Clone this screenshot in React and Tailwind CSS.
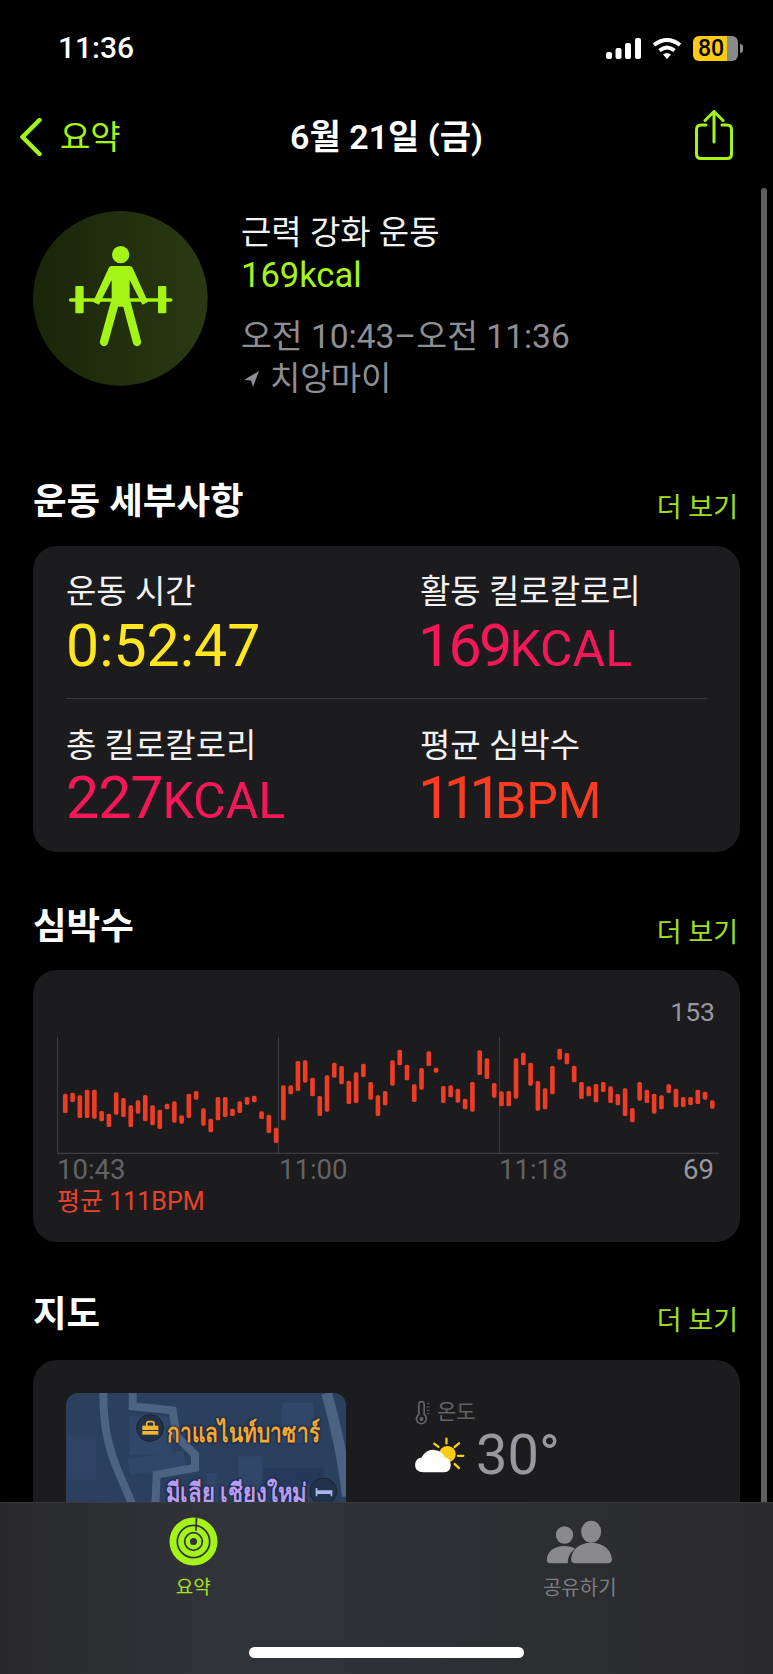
import React from 'react';

// top / bottom of each heart rate bar, measured from the chart
const heartBars = [
    [370, 428], [367, 395], [375, 443], [358, 443], [358, 445], [422, 453], [430, 470], [366, 433], [383, 440], [405, 470],
    [390, 430], [374, 453], [405, 465], [418, 476], [400, 417], [393, 457], [435, 460], [370, 443], [362, 388], [414, 466],
    [445, 486], [380, 450], [380, 440], [415, 437], [393, 428], [380, 403], [376, 396], [423, 446], [433, 488], [472, 518],
    [345, 450], [345, 372], [272, 362], [270, 337], [322, 378], [377, 437], [315, 424], [277, 322], [287, 342], [331, 401],
    [306, 398], [280, 320], [335, 388], [375, 437], [362, 405], [270, 346], [238, 285], [283, 330], [342, 395], [293, 358],
    [243, 287], [292, 307], [347, 398], [345, 381], [355, 397], [385, 417], [335, 424], [240, 314], [264, 326], [338, 382],
    [363, 408], [362, 408], [264, 385], [247, 284], [277, 346], [332, 421], [354, 417], [287, 372], [235, 268], [248, 282],
    [286, 336], [335, 386], [348, 378], [341, 396], [335, 365], [348, 398], [371, 405], [354, 437], [413, 456], [335, 391],
    [358, 398], [370, 430], [375, 417], [342, 368], [355, 411], [380, 410], [380, 404], [358, 401], [364, 388], [390, 415],
];

const SectionHeader = ({ title }) => (
    <div className="flex h-[44px] items-center justify-between pl-[33px] pr-[35px]">
        <h2 className="text-[36.5px] font-bold leading-[44px] text-white">{title}</h2>
        <span className="pt-[12px] text-[27px] leading-[44px] text-[#9fe01e]">더 보기</span>
    </div>
);

const Metric = ({ label, value, unit, color, numberClass = '', valueClass = '' }) => (
    <div>
        <div className="text-[33px] leading-[40px] text-[#f2f2f2]">{label}</div>
        <div className={`text-[59px] leading-[64px] ${color} ${valueClass}`}>
            <span className={numberClass}>{value}</span>
            {unit && <span className="text-[50px] leading-none">{unit}</span>}
        </div>
    </div>
);

const LifterIcon = () => (
    <svg viewBox="40 3 525 525" className="h-[175px] w-[175px]">
        <defs>
            <linearGradient id="lifterBg" x1="0" y1="0" x2="1" y2="0">
                <stop offset="0" stopColor="#1a2509" />
                <stop offset="1" stopColor="#2b3913" />
            </linearGradient>
        </defs>
        <circle cx="302" cy="265" r="262" fill="url(#lifterBg)" />
        <g fill="#a4f516" stroke="#a4f516">
            <circle cx="303" cy="134" r="26" stroke="none" />
            <path d="M275 168 H331 Q337 168 340 176 L385 276 L368 284 L330 210 V290 H276 V210 L238 284 L220 276 L266 176 Q269 168 275 168Z" stroke="none" />
            <path d="M153 270 H453" strokeWidth="11" strokeLinecap="round" />
            <rect x="167" y="228" width="25" height="82" rx="3" stroke="none" />
            <rect x="415" y="228" width="25" height="82" rx="3" stroke="none" />
            <path d="M285 280 L253 396 M321 280 L352 396" strokeWidth="25" strokeLinecap="round" fill="none" />
        </g>
    </svg>
);

const MapTile = () => (
    <div className="relative h-[180px] w-[280px] shrink-0 overflow-hidden rounded-[12px] bg-[#2b3f5e]">
        <svg viewBox="48 40 840 540" className="absolute inset-0 h-full w-full">
            <rect x="48" y="170" width="90" height="130" fill="#2f4464" />
            <rect x="240" y="110" width="125" height="115" fill="#304769" />
            <rect x="235" y="225" width="170" height="50" fill="#304769" transform="rotate(-8 320 250)" />
            <rect x="565" y="230" width="70" height="100" fill="#304769" />
            <rect x="695" y="70" width="95" height="120" fill="#304769" />
            <rect x="640" y="265" width="180" height="50" fill="#26395a" />
            <rect x="470" y="280" width="30" height="90" fill="#304769" />
            <g fill="none" stroke="#4c6384" strokeWidth="24">
                <path d="M160 40 C160 130 170 200 215 300 C235 345 240 360 250 380" />
                <path d="M248 40 V80 L368 92 L380 170 L435 225 V265 L320 285 L316 380" />
                <path d="M830 40 C855 130 880 240 892 350" strokeWidth="32" />
            </g>
            <circle cx="300" cy="145" r="40" fill="#22324a" stroke="#182436" strokeWidth="3" />
            <path d="M290 140 V132 Q290 126 296 126 H306 Q312 126 312 132 V140" fill="none" stroke="#f5b52e" strokeWidth="5" />
            <rect x="277" y="138" width="48" height="13" fill="#f5b52e" />
            <rect x="277" y="154" width="48" height="11" fill="#f5b52e" />
            <circle cx="820" cy="335" r="40" fill="#22324a" stroke="#182436" strokeWidth="3" />
            <path d="M797 325 V350 H802 V343 H842 V350 H847 V332 H802 V325Z" fill="#a9b6f0" />
        </svg>
        <span className="absolute left-[101px] top-[24px] origin-left scale-x-[0.8] whitespace-nowrap text-[26px] font-bold leading-[32px] text-[#f2a935] [text-shadow:0_0_2px_#101828,0_0_3px_#101828]">กาแลไนท์บาซาร์</span>
        <span className="absolute left-[100px] top-[84px] origin-left scale-x-[0.85] whitespace-nowrap text-[26px] font-bold leading-[32px] text-[#b79cf2] [text-shadow:0_0_2px_#101828,0_0_3px_#101828]">มีเลีย เชียงใหม่</span>
    </div>
);

const WeatherIcon = () => (
    <svg viewBox="40 140 155 115" className="h-[38px] w-[52px]">
        <circle cx="140" cy="195" r="25" fill="#fdcb12" />
        <g stroke="#fdcb12" strokeWidth="7" strokeLinecap="round">
            <path d="M137 148 V163 M162 173 L175 162 M172 200 H188 M162 225 L175 237 M100 163 L113 173" />
        </g>
        <path d="M68 250 Q42 250 42 228 Q42 208 62 205 Q75 180 100 182 Q125 184 132 205 Q150 208 150 228 Q150 250 130 250Z" fill="#fff" />
    </svg>
);

export default function App() {
    return (
        <div className="relative h-[1674px] w-[773px] overflow-hidden bg-black font-['Roboto','Noto_Sans_CJK_KR',sans-serif] text-white">
            {/* status bar */}
            <div className="flex h-[96px] items-center justify-between pl-[58px] pr-[30px]">
                <span className="text-[30px] font-medium leading-none">11:36</span>
                <div className="flex items-center">
                    <svg viewBox="0 0 35 21" className="h-[21px] w-[35px]" fill="#fff">
                        <rect x="0" y="14" width="6" height="7" rx="2" />
                        <rect x="9.5" y="10" width="6" height="11" rx="2" />
                        <rect x="19" y="5" width="6" height="16" rx="2" />
                        <rect x="29" y="0" width="6" height="21" rx="2" />
                    </svg>
                    <svg viewBox="0 0 30 21" className="ml-[11px] h-[21px] w-[30px]" fill="none" stroke="#fff" strokeWidth="4">
                        <path d="M2 7 Q15 -3 28 7" />
                        <path d="M7.5 12.5 Q15 6.5 22.5 12.5" />
                        <path d="M11 16.5 Q15 13.5 19 16.5 L15 21Z" fill="#fff" stroke="none" />
                    </svg>
                    <div className="ml-[11px] flex h-[25px] w-[45px] items-center justify-center rounded-[6px] bg-linear-to-r from-[#fdcb12] from-75% to-[#8a8a8c] to-75% text-[23px] font-medium leading-none text-black">
                        <span className="pr-[9px]">80</span>
                    </div>
                    <div className="ml-[2px] h-[9px] w-[3px] rounded-r-[3px] bg-[#8a8a8c]" />
                </div>
            </div>

            {/* nav bar */}
            <div className="grid h-[82px] grid-cols-[1fr_auto_1fr] items-center px-[20px]">
                <div className="flex items-center">
                    <svg viewBox="0 0 22 38" className="-ml-[1px] h-[38px] w-[23px]" fill="none" stroke="#a4f516" strokeWidth="4.5" strokeLinecap="round" strokeLinejoin="round">
                        <path d="M20 2 L3 19 L20 36" />
                    </svg>
                    <span className="ml-[18px] text-[33px] leading-none text-[#a4f516]">요약</span>
                </div>
                <h1 className="text-[34px] font-semibold leading-none">6월 21일 (금)</h1>
                <div className="flex justify-end pr-[20px]">
                    <svg viewBox="0 0 38 50" className="-mt-[4px] h-[50px] w-[38px]" fill="none" stroke="#a4f516" strokeWidth="3" strokeLinecap="round" strokeLinejoin="round">
                        <path d="M11 15 H6 Q1.5 15 1.5 19.5 V44 Q1.5 48.5 6 48.5 H32 Q36.5 48.5 36.5 44 V19.5 Q36.5 15 32 15 H27" />
                        <path d="M19 32 V2 M10 10.5 L19 1.5 L28 10.5" />
                    </svg>
                </div>
            </div>

            {/* workout summary */}
            <div className="ml-[33px] mt-[33px] flex">
                <LifterIcon />
                <div className="ml-[33px]">
                    <div className="text-[33px] leading-[43px] text-[#f2f2f2]">근력 강화 운동</div>
                    <div className="text-[34.5px] leading-[43px] text-[#a4f516]">169kcal</div>
                    <div className="mt-[18px] text-[33.5px] leading-[43px] text-[#8e8e93]">오전 10:43–오전 11:36</div>
                    <div className="flex items-center text-[33px] leading-[42px] text-[#8e8e93]">
                        <svg viewBox="0 0 15 16" className="ml-[3px] mr-[11px] h-[16px] w-[15px]" fill="#8e8e93">
                            <path d="M15 0 L0 9 L7 9.5 L9 16Z" />
                        </svg>
                        치앙마이
                    </div>
                </div>
            </div>

            {/* workout details */}
            <div className="mt-[80px]">
                <SectionHeader title="운동 세부사항" />
            </div>
            <div className="mx-[33px] mt-[22px] h-[306px] rounded-[24px] bg-[#1c1c1e] px-[33px] pt-[26px]">
                <div className="grid grid-cols-[354px_1fr]">
                    <Metric label="운동 시간" value="0:52:47" color="text-[#ffe620]" valueClass="pt-[2px]" />
                    <Metric label="활동 킬로칼로리" value="169" unit="KCAL" color="text-[#f5175a]" valueClass="pt-[2px]" numberClass="-ml-[2px] tracking-[-2.7px]" />
                </div>
                <div className="mt-[20px] h-px bg-[#38383a]" />
                <div className="mt-[27px] grid grid-cols-[354px_1fr]">
                    <Metric label="총 킬로칼로리" value="227" unit="KCAL" color="text-[#f5175a]" numberClass="tracking-[-1px]" />
                    <Metric label="평균 심박수" value="111" unit="BPM" color="text-[#ff3b1f]" numberClass="-ml-[2px] tracking-[-7.5px]" />
                </div>
            </div>

            {/* heart rate */}
            <div className="mt-[53px]">
                <SectionHeader title="심박수" />
            </div>
            <div className="mx-[33px] mt-[21px] h-[272px] rounded-[24px] bg-[#1c1c1e] pl-[24px] pr-[21px] pt-[27px]">
                <div className="pr-[4px] text-right text-[26.5px] leading-[30px] text-[#98989e]">153</div>
                <svg viewBox="0 0 662 117" className="mt-[10px] block h-[117px] w-[662px]">
                    <g stroke="#3d3d40" strokeWidth="1">
                        <path d="M0.5 0 V116 M221.5 0 V116 M442.5 0 V116" />
                        <path d="M0 116.5 H662" strokeWidth="1.5" />
                    </g>
                    {heartBars.map(([top, bottom], i) => (
                        <rect
                            key={i}
                            x={6 + i * 7.27}
                            y={(top - 200) / 3}
                            width="4.6"
                            height={(bottom - top) / 3}
                            rx="1.6"
                            fill="#ef3d23"
                        />
                    ))}
                </svg>
                <div className="grid grid-cols-[222px_220px_1fr_auto] pr-[5px] text-[27.5px] leading-[32px] text-[#636366]">
                    <span>10:43</span>
                    <span>11:00</span>
                    <span>11:18</span>
                    <span className="text-[#98989e]">69</span>
                </div>
                <div className="text-[25px] leading-[32px] text-[#e8432a]">평균 111BPM</div>
            </div>

            {/* map */}
            <div className="mt-[51px]">
                <SectionHeader title="지도" />
            </div>
            <div className="mx-[33px] mt-[23px] flex h-[300px] rounded-[24px] bg-[#1c1c1e] pl-[33px] pt-[33px]">
                <MapTile />
                <div className="ml-[68px]">
                    <div className="flex items-center pt-[4px] text-[21px] leading-[30px] text-[#636366]">
                        <svg viewBox="40 25 50 75" className="mr-[6px] h-[25px] w-[17px]" fill="none" stroke="#636366" strokeWidth="5">
                            <path d="M54 68 V38 Q54 30 62 30 Q70 30 70 38 V68 Q78 74 76 84 Q73 96 62 96 Q50 96 47 84 Q46 74 54 68Z" />
                            <circle cx="62" cy="82" r="6" fill="#636366" stroke="none" />
                            <path d="M78 36 H86 M78 46 H86 M78 56 H86 M78 66 H86" strokeWidth="3" />
                        </svg>
                        온도
                    </div>
                    <div className="flex items-center">
                        <WeatherIcon />
                        <span className="ml-[10px] text-[56px] leading-[56px] text-[#98989e]">30°</span>
                    </div>
                    <div className="mt-[14px] text-[21px] leading-[30px] text-[#636366]">습도</div>
                </div>
            </div>

            {/* scroll indicator */}
            <div className="absolute left-[761px] top-[188px] h-[1330px] w-[6px] rounded-full bg-[#5f5f62]" />

            {/* tab bar */}
            <div className="absolute bottom-0 left-0 right-0 h-[172px] border-t border-[#3a3a3c] bg-linear-to-r from-[#29292b] via-[#31343a] via-30% to-[#2a2a2c]">
                <div className="grid grid-cols-2 pt-[14px]">
                    <div className="flex flex-col items-center">
                        <svg viewBox="-25 -25 50 50" className="h-[49px] w-[49px]">
                            <circle r="24.5" fill="#a4f516" />
                            <g fill="none" stroke="#31343a" strokeWidth="1.8">
                                <circle r="16.5" />
                                <circle r="9" />
                                <path d="M3 -24 L2.5 -11" />
                            </g>
                            <circle r="3.6" fill="#31343a" />
                        </svg>
                        <span className="mt-[9px] text-[19px] leading-[26px] text-[#a4e01e]">요약</span>
                    </div>
                    <div className="flex flex-col items-center">
                        <svg viewBox="50 40 200 135" className="mt-[3px] h-[45px] w-[67px]" fill="#8a8a8c">
                            <circle cx="105" cy="85" r="26" />
                            <ellipse cx="185" cy="75" rx="30" ry="33" />
                            <path d="M52 160 C52 135 75 118 105 118 C118 118 128 121 137 126 C122 137 115 150 115 170 L62 170 Q52 170 52 160Z" />
                            <path d="M125 158 C125 130 150 108 185 108 C220 108 247 130 247 158 Q247 170 235 170 L137 170 Q125 170 125 158Z" />
                        </svg>
                        <span className="mt-[10px] text-[20px] leading-[26px] text-[#7e7e80]">공유하기</span>
                    </div>
                </div>
                <div className="absolute bottom-[16px] left-[249px] h-[11px] w-[275px] rounded-full bg-white" />
            </div>
        </div>
    );
}
